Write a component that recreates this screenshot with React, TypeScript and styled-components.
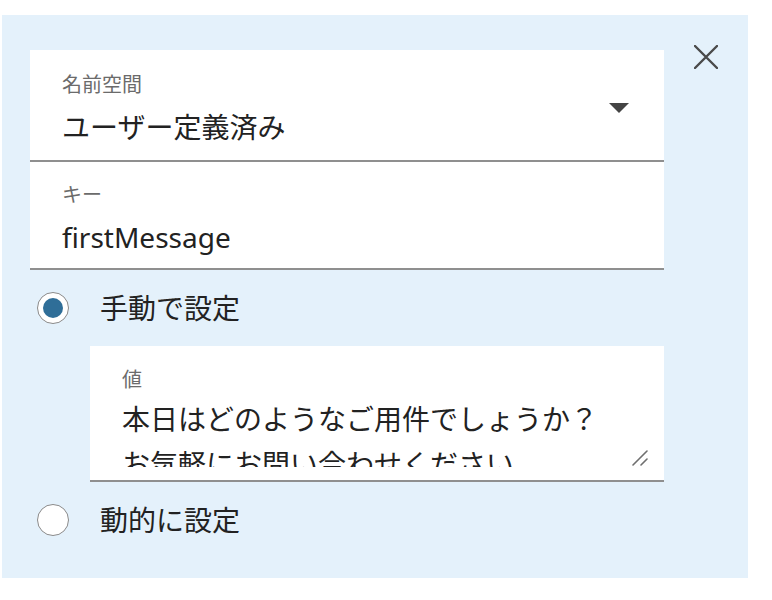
import React from "react";
import styled, { createGlobalStyle } from "styled-components";

const Global = createGlobalStyle`
  html, body { margin: 0; padding: 0; background: #ffffff; }
  body { font-family: "Noto Sans", "Noto Sans CJK JP", sans-serif; }
`;

const Page = styled.div`
  padding: 15px 0 22px 2px;
`;

const Panel = styled.div`
  box-sizing: border-box;
  width: 746px;
  height: 563px;
  background: #e4f1fb;
  padding: 35px 0 0 28px;
  display: flex;
  align-items: flex-start;
`;

const Form = styled.div`
  width: 634px;
  display: flex;
  flex-direction: column;
`;

const Field = styled.div<{ $pt: number; $pb: number; $indent?: number; $pr?: number }>`
  box-sizing: border-box;
  background: #ffffff;
  border-bottom: 2px solid #8f8f8f;
  padding: ${(p) => p.$pt}px ${(p) => p.$pr ?? 32}px ${(p) => p.$pb}px 32px;
  margin-left: ${(p) => p.$indent ?? 0}px;
  display: flex;
  align-items: center;
`;

const FieldBody = styled.div`
  flex: 1;
  display: flex;
  flex-direction: column;
  gap: 10px;
`;

const Label = styled.div`
  font-size: 20px;
  line-height: 28px;
  color: #6b6b6b;
`;

const Value = styled.div`
  font-size: 28px;
  line-height: 36px;
  color: #222222;
`;

const Arrow = styled.div`
  width: 0;
  height: 0;
  border-left: 10px solid transparent;
  border-right: 10px solid transparent;
  border-top: 10px solid #444444;
  margin-right: 3px;
`;

const RadioRow = styled.label`
  display: flex;
  align-items: center;
  gap: 31px;
  margin: 20px 0 0 7px;
  height: 36px;
  cursor: pointer;
`;

const RadioCircle = styled.span<{ $checked?: boolean }>`
  box-sizing: border-box;
  width: 32px;
  height: 32px;
  border-radius: 50%;
  border: 1px solid #8a8a8a;
  background: #ffffff;
  display: flex;
  align-items: center;
  justify-content: center;
  &::after {
    content: "";
    width: 20px;
    height: 20px;
    border-radius: 50%;
    background: ${(p) => (p.$checked ? "#2f6e98" : "transparent")};
  }
`;

const RadioText = styled.span`
  font-size: 28px;
  line-height: 36px;
  color: #222222;
`;

const ValueBox = styled(Field)`
  margin-top: 20px;
  align-items: stretch;
`;

const ValueBody = styled.div`
  flex: 1;
  display: flex;
  flex-direction: column;
  gap: 3px;
`;

const AreaWrap = styled.div`
  position: relative;
  height: 70px;
`;

const TextArea = styled.textarea`
  box-sizing: border-box;
  width: 100%;
  height: 70px;
  margin: 0;
  padding: 0;
  border: none;
  outline: none;
  background: transparent;
  resize: none;
  overflow: hidden;
  display: block;
  font-family: "Noto Sans", "Noto Sans CJK JP", sans-serif;
  font-size: 28px;
  line-height: 45px;
  color: #222222;
`;

const Grip = styled.svg`
  position: absolute;
  right: 2px;
  bottom: 1px;
  width: 16px;
  height: 16px;
  background: #ffffff;
`;

const CloseButton = styled.button`
  margin: -5px 0 0 30px;
  width: 24px;
  height: 24px;
  padding: 0;
  border: none;
  background: transparent;
  cursor: pointer;
  display: flex;
`;

export default function App() {
  return (
    <>
      <Global />
      <Page>
        <Panel>
          <Form>
            <Field $pt={21} $pb={15}>
              <FieldBody>
                <Label>名前空間</Label>
                <Value>ユーザー定義済み</Value>
              </FieldBody>
              <Arrow />
            </Field>
            <Field $pt={19} $pb={13}>
              <FieldBody>
                <Label>キー</Label>
                <Value>firstMessage</Value>
              </FieldBody>
            </Field>
            <RadioRow>
              <RadioCircle $checked />
              <RadioText>手動で設定</RadioText>
            </RadioRow>
            <ValueBox $pt={20} $pb={13} $indent={60} $pr={14}>
              <ValueBody>
                <Label>値</Label>
                <AreaWrap>
                  <TextArea
                    defaultValue={"本日はどのようなご用件でしょうか？\nお気軽にお問い合わせください"}
                  />
                  <Grip viewBox="0 0 16 16">
                    <path d="M1 15 L15 1 M9 15 L15 9" stroke="#6f6f6f" strokeWidth="1.6" strokeLinecap="round" />
                  </Grip>
                </AreaWrap>
              </ValueBody>
            </ValueBox>
            <RadioRow>
              <RadioCircle />
              <RadioText>動的に設定</RadioText>
            </RadioRow>
          </Form>
          <CloseButton aria-label="閉じる">
            <svg width="24" height="24" viewBox="0 0 24 24">
              <path d="M1 1 L23 23 M23 1 L1 23" stroke="#4a4a4a" strokeWidth="2.4" strokeLinecap="round" />
            </svg>
          </CloseButton>
        </Panel>
      </Page>
    </>
  );
}
